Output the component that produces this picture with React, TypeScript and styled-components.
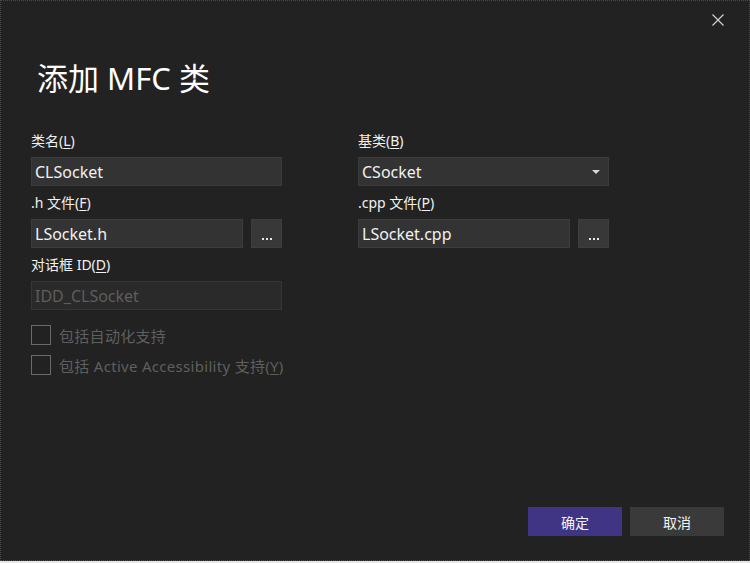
import React from "react";
import styled, { createGlobalStyle } from "styled-components";

const Global = createGlobalStyle`
  html, body { margin: 0; padding: 0; background: #e6e6e6; }
  body { font-family: "Noto Sans", "Noto Sans CJK SC", sans-serif; }
  * { box-sizing: border-box; }
`;

const Window = styled.div`
  position: relative;
  width: 750px;
  height: 561px;
  background: #222222;
  border: 1px dotted #4a4a4a;
  color: #f1f1f1;
  display: flex;
  flex-direction: column;
  padding: 0 0 0 30px;
`;

const Close = styled.button`
  position: absolute;
  top: 12px;
  right: 24px;
  width: 14px;
  height: 14px;
  padding: 0;
  border: none;
  background: transparent;
  display: flex;
`;

const Title = styled.h1`
  margin: 55px 0 0 6px;
  height: 45px;
  font-family: "Noto Sans", "Noto Sans CJK SC", sans-serif;
  font-size: 31px;
  font-weight: 400;
  line-height: 44px;
  color: #ffffff;
`;

const Columns = styled.div`
  margin-top: 30px;
  display: grid;
  grid-template-columns: 251px 251px;
  column-gap: 76px;
`;

const Column = styled.div`
  display: flex;
  flex-direction: column;
`;

const Label = styled.label`
  font-family: "Noto Sans", "Noto Sans CJK SC", sans-serif;
  font-size: 14px;
  line-height: 20px;
  height: 20px;
  margin-bottom: 6px;
  color: #f1f1f1;
  u { text-decoration: underline; text-underline-offset: 2px; }
`;

const Row = styled.div`
  display: flex;
  gap: 8px;
  margin-bottom: 7px;
`;

const Field = styled.div<{ $disabled?: boolean }>`
  flex: 1;
  height: 29px;
  display: flex;
  align-items: center;
  padding: 0 3px;
  background: ${(p) => (p.$disabled ? "#2a2a2a" : "#333333")};
  border: 1px solid ${(p) => (p.$disabled ? "#363636" : "#3c3c3c")};
  color: ${(p) => (p.$disabled ? "#5e5e5e" : "#f1f1f1")};
  font-family: "Noto Sans", "Noto Sans CJK SC", sans-serif;
  font-size: 16px;
  justify-content: space-between;
`;

const Browse = styled.button`
  width: 31px;
  height: 29px;
  background: #383838;
  border: 1px solid #3e3e3e;
  color: #f1f1f1;
  padding: 0;
  display: flex;
  align-items: flex-end;
  justify-content: center;
  padding-bottom: 7px;
  gap: 2px;
  span { width: 2px; height: 2px; background: #e8e8e8; display: block; }
`;

const Checks = styled.div`
  margin-top: 8px;
  display: flex;
  flex-direction: column;
  gap: 10px;
`;

const CheckRow = styled.div`
  display: flex;
  align-items: center;
  gap: 8px;
  height: 20px;
  white-space: nowrap;
  color: #5f5f5f;
  font-family: "Noto Sans", "Noto Sans CJK SC", sans-serif;
  font-size: 15px;
  letter-spacing: 0.3px;
  u { text-decoration: underline; text-underline-offset: 2px; }
`;

const Box = styled.span`
  flex: none;
  width: 20px;
  height: 20px;
  border: 1px solid #6a6a6a;
  display: block;
`;

const Footer = styled.div`
  margin-top: auto;
  margin-bottom: 24px;
  padding-right: 25px;
  display: flex;
  justify-content: flex-end;
  gap: 8px;
`;

const Button = styled.button<{ $primary?: boolean }>`
  width: 94px;
  height: 29px;
  border: none;
  background: ${(p) => (p.$primary ? "#3f3584" : "#3a3a3a")};
  color: #f4f4f4;
  font-family: "Noto Sans CJK SC", sans-serif;
  font-size: 14px;
`;

const Dots = () => (
  <Browse>
    <span />
    <span />
    <span />
  </Browse>
);

export default function App() {
  return (
    <>
      <Global />
      <Window>
        <Close aria-label="close">
          <svg width="14" height="14" viewBox="0 0 14 14">
            <path d="M1.5 1.5L12.5 12.5M12.5 1.5L1.5 12.5" stroke="#d0d0d0" strokeWidth="1.2" />
          </svg>
        </Close>
        <Title>添加 MFC 类</Title>
        <Columns>
          <Column>
            <Label>类名(<u>L</u>)</Label>
            <Row>
              <Field>CLSocket</Field>
            </Row>
            <Label>.h 文件(<u>F</u>)</Label>
            <Row>
              <Field>LSocket.h</Field>
              <Dots />
            </Row>
            <Label>对话框 ID(<u>D</u>)</Label>
            <Row>
              <Field $disabled>IDD_CLSocket</Field>
            </Row>
            <Checks>
              <CheckRow>
                <Box />
                包括自动化支持
              </CheckRow>
              <CheckRow>
                <Box />
                <span>包括 Active Accessibility 支持(<u>Y</u>)</span>
              </CheckRow>
            </Checks>
          </Column>
          <Column>
            <Label>基类(<u>B</u>)</Label>
            <Row>
              <Field>
                CSocket
                <svg width="8" height="4" viewBox="0 0 8 4" style={{ marginRight: 5 }}>
                  <path d="M0 0H8L4 4Z" fill="#d8d8d8" />
                </svg>
              </Field>
            </Row>
            <Label>.cpp 文件(<u>P</u>)</Label>
            <Row>
              <Field>LSocket.cpp</Field>
              <Dots />
            </Row>
          </Column>
        </Columns>
        <Footer>
          <Button $primary>确定</Button>
          <Button>取消</Button>
        </Footer>
      </Window>
    </>
  );
}
